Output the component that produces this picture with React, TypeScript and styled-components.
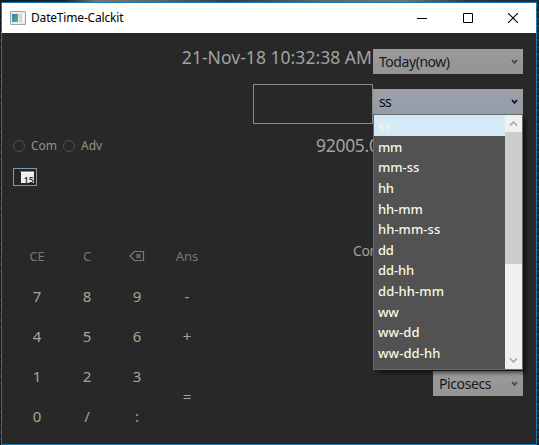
import React from "react";
import styled, { createGlobalStyle } from "styled-components";

const Global = createGlobalStyle`
  * { box-sizing: border-box; }
  body { margin: 0; overflow: hidden; font-family: "Noto Sans", "Open Sans", sans-serif; }
`;

const Desktop = styled.div`
  width: 539px;
  height: 445px;
  padding: 2px 2px 0 1px;
  background:
    repeating-linear-gradient(0deg, rgba(0, 0, 0, 0.35) 0 2px, transparent 2px 5px, rgba(90, 105, 120, 0.22) 5px 7px),
    linear-gradient(90deg, #151c24 0, #20262c 12%, #7c766c 18%, #62625f 30%, #343c44 42%, #67655f 60%, #77746c 75%, #30363b 87%, #202830 100%);
`;

const Window = styled.main`
  display: flex;
  flex-direction: column;
  width: 536px;
  height: 443px;
  border: 1px solid #1679b5;
  background: #282828;
`;

const TitleBar = styled.header`
  display: flex;
  align-items: center;
  flex: 0 0 30px;
  padding-left: 8px;
  background: #fff;
  color: #000;
`;

const Title = styled.h1`
  flex: 1;
  margin: 0 0 1px 5px;
  font-size: 12px;
  font-weight: 400;
  line-height: 18px;
  letter-spacing: -0.18px;
`;

const CaptionButton = styled.button`
  display: grid;
  place-items: center;
  width: 45.5px;
  height: 30px;
  padding: 0;
  border: 0;
  background: none;
`;

const Client = styled.div`
  display: flex;
  flex-direction: column;
  padding: 16px 13px 0 10px;
`;

const DateRow = styled.div`
  display: flex;
  justify-content: flex-end;
  height: 25px;
  margin-bottom: 10px;
`;

const DateText = styled.span`
  margin: -4px 1px 0 0;
  color: #a2a2a2;
  font-size: 17.5px;
  line-height: 24px;
  letter-spacing: 0.04px;
  white-space: nowrap;
`;

const EntryRow = styled.div`
  display: flex;
  justify-content: flex-end;
  align-items: flex-start;
  height: 40px;
`;

const Entry = styled.div`
  width: 120px;
  height: 40px;
  border: 1px solid #888;
`;

const ComboRoot = styled.div<{ $width: number; $active?: boolean }>`
  position: relative;
  display: flex;
  align-items: center;
  justify-content: space-between;
  width: ${(p) => p.$width}px;
  height: 25px;
  margin-top: ${(p) => (p.$active ? 5 : 0)}px;
  padding: 0 4px 0 6px;
  background: ${(p) => (p.$active ? "linear-gradient(#9da0a5, #929dab)" : "linear-gradient(#9b9b9b, #949494)")};
  color: ${(p) => (p.$active ? "#080808" : "#191919")};
  font-size: 14px;
  line-height: 20px;
`;

const ComboText = styled.span<{ $spacing: number }>`
  letter-spacing: ${(p) => p.$spacing}px;
`;

const Chevron = styled.svg`
  display: block;
`;

const Popup = styled.div`
  position: absolute;
  z-index: 2;
  top: 25px;
  left: 0;
  display: flex;
  width: 150px;
  height: 256px;
  border: 1px solid #6b6b6b;
  background: #525252;
  box-shadow: 4px 4px 4px -1px rgba(0, 0, 0, 0.55);
`;

const Options = styled.ul`
  flex: 1;
  margin: 0;
  padding: 0;
  list-style: none;
`;

const Option = styled.li<{ $selected: boolean; $spacing: number }>`
  height: 20.65px;
  padding: 2px 0 0 4px;
  background: ${(p) => (p.$selected ? "#d5eaf8" : "transparent")};
  color: ${(p) => (p.$selected ? "#f6f5de" : "#f7f7e2")};
  font-size: 13px;
  font-weight: 500;
  line-height: 18px;
  letter-spacing: ${(p) => p.$spacing}px;
`;

const Scrollbar = styled.div`
  display: flex;
  flex-direction: column;
  width: 17px;
  background: #f0f0f0;
`;

const ScrollButton = styled.div`
  display: grid;
  place-items: center;
  height: 17px;
`;

const Thumb = styled.div`
  height: 132px;
  margin-bottom: auto;
  background: #cdcdcd;
`;

const ModeRow = styled.div`
  display: flex;
  align-items: center;
  height: 22px;
  margin-top: 10px;
  padding-left: 1px;
`;

const Radio = styled.label<{ $width: number }>`
  display: flex;
  align-items: center;
  gap: 6px;
  width: ${(p) => p.$width}px;
  padding-top: 1px;
  color: #93938b;
  font-size: 12px;
  line-height: 18px;
`;

const RadioDot = styled.i`
  width: 12px;
  height: 12px;
  border: 1px solid #505050;
  border-radius: 50%;
`;

const Result = styled.span`
  margin-left: 203px;
  color: #a2a2a2;
  font-size: 17.5px;
  line-height: 24px;
  letter-spacing: -0.3px;
  white-space: nowrap;
`;

const CalendarButton = styled.button`
  display: block;
  width: 24px;
  height: 18px;
  margin: 12px 0 0 1px;
  padding: 0;
  border: 1px solid #8396a8;
  background: #262626;
`;

const Lower = styled.div`
  display: flex;
  justify-content: space-between;
  height: 200px;
  margin-top: 50px;
`;

const Keypad = styled.div`
  display: grid;
  grid-template-columns: repeat(4, 50px);
  grid-template-rows: repeat(5, 40px);
`;

const Key = styled.button<{ $command?: boolean; $tall?: boolean }>`
  display: grid;
  place-items: center;
  grid-row: span ${(p) => (p.$tall ? 2 : 1)};
  padding: 0;
  border: 0;
  background: none;
  color: ${(p) => (p.$command ? "#777" : "#a6a696")};
  font: ${(p) => (p.$command ? "13px" : "15px")} "Noto Sans", sans-serif;
  letter-spacing: ${(p) => (p.$command ? "-0.1px" : "0")};
`;

const Side = styled.div`
  display: flex;
  flex-direction: column;
  align-items: flex-end;
  justify-content: space-between;
  width: 170px;
  padding: 5px 0 40px;
`;

const Convert = styled.span`
  align-self: flex-start;
  color: #a4a496;
  font-size: 14px;
  line-height: 20px;
  letter-spacing: -0.4px;
`;

const options: [string, number][] = [
  ["ss", 0], ["mm", -0.3], ["mm-ss", 0], ["hh", -0.4], ["hh-mm", -0.1], ["hh-mm-ss", 0.05],
  ["dd", -0.2], ["dd-hh", -0.1], ["dd-hh-mm", 0.1], ["ww", -0.2], ["ww-dd", 0.05], ["ww-dd-hh", 0.1],
];

const Arrow = ({ up }: { up?: boolean }) => (
  <svg width="9" height="7" viewBox="0 0 9 7">
    <path d={up ? "M1 5.5 4.5 2 8 5.5" : "M1 1.5 4.5 5 8 1.5"} fill="none" stroke="#a3a3a3" strokeWidth="1.5" />
  </svg>
);

type ComboProps = { label: string; width: number; spacing: number; active?: boolean; children?: React.ReactNode };

const Combo = ({ label, width, spacing, active, children }: ComboProps) => (
  <ComboRoot $width={width} $active={active}>
    <ComboText $spacing={spacing}>{label}</ComboText>
    <Chevron width="9" height="8" viewBox="0 0 9 8">
      <path d="M2 2 4.5 5 7 2" fill="none" stroke={active ? "#111" : "#444"} strokeWidth="1.7" />
    </Chevron>
    {children}
  </ComboRoot>
);

const Backspace = () => (
  <svg width="16" height="12" viewBox="0 0 16 12" fill="none" stroke="#7b7b7b">
    <path d="M5.5 1.5h9v9h-9L1 6z" strokeWidth="1.2" />
    <path d="m7.5 4 4 4m0-4-4 4" strokeWidth="1.3" />
  </svg>
);

const AppIcon = () => (
  <svg width="16" height="14" viewBox="0 0 16 14">
    <defs>
      <linearGradient id="pane" x1="0" y1="0" x2="1" y2="1">
        <stop stopColor="#3d78b5" />
        <stop offset="1" stopColor="#55b874" />
      </linearGradient>
    </defs>
    <path d="M.5.5h15v13H.5z" fill="#e9ecee" stroke="#a2a6aa" />
    <path d="M2 3h6v8H2z" fill="url(#pane)" />
    <path d="M9 3h3v8H9z" fill="#d4dade" />
    <path d="M13 3h1v8h-1z" fill="#fff" />
  </svg>
);

const CalendarIcon = () => (
  <svg width="22" height="16" viewBox="0 0 22 16">
    <path d="M7 4h13v10H7z" fill="#f0f0f0" />
    <path d="M6 2h14v1H6z" fill="#5489b9" />
    <path d="M7 3h13v1H7z" fill="#fff" />
    <text x="9.5" y="13.5" fill="#303030" fontFamily="Noto Sans, sans-serif" fontSize="9" fontWeight="600">15</text>
  </svg>
);

export default function App() {
  return (
    <>
      <Global />
      <Desktop>
        <Window>
          <TitleBar>
            <AppIcon />
            <Title>DateTime-Calckit</Title>
            <CaptionButton aria-label="Minimize">
              <svg width="10" height="10"><path d="M0 5.5h10" stroke="#000" /></svg>
            </CaptionButton>
            <CaptionButton aria-label="Maximize">
              <svg width="10" height="10"><path d="M.5.5h9v9h-9z" fill="none" stroke="#000" /></svg>
            </CaptionButton>
            <CaptionButton aria-label="Close">
              <svg width="10" height="10"><path d="m0 0 10 10M10 0 0 10" stroke="#000" strokeWidth="1.1" /></svg>
            </CaptionButton>
          </TitleBar>
          <Client>
            <DateRow>
              <DateText>21-Nov-18 10:32:38 AM</DateText>
              <Combo label="Today(now)" width={150} spacing={-0.45} />
            </DateRow>
            <EntryRow>
              <Entry />
              <Combo label="ss" width={150} spacing={-0.6} active>
                <Popup>
                  <Options>
                    {options.map(([text, spacing], i) => (
                      <Option key={text} $selected={i === 0} $spacing={spacing}>{text}</Option>
                    ))}
                  </Options>
                  <Scrollbar>
                    <ScrollButton><Arrow up /></ScrollButton>
                    <Thumb />
                    <ScrollButton><Arrow /></ScrollButton>
                  </Scrollbar>
                </Popup>
              </Combo>
            </EntryRow>
            <ModeRow>
              <Radio $width={50}><RadioDot />Com</Radio>
              <Radio $width={50}><RadioDot />Adv</Radio>
              <Result>92005.0</Result>
            </ModeRow>
            <CalendarButton aria-label="Calendar"><CalendarIcon /></CalendarButton>
            <Lower>
              <Keypad>
                <Key $command>CE</Key>
                <Key $command>C</Key>
                <Key $command aria-label="Backspace"><Backspace /></Key>
                <Key $command>Ans</Key>
                <Key>7</Key><Key>8</Key><Key>9</Key><Key>-</Key>
                <Key>4</Key><Key>5</Key><Key>6</Key><Key>+</Key>
                <Key>1</Key><Key>2</Key><Key>3</Key><Key $tall>=</Key>
                <Key>0</Key><Key>/</Key><Key>:</Key>
              </Keypad>
              <Side>
                <Convert>Con</Convert>
                <Combo label="Picosecs" width={90} spacing={-0.4} />
              </Side>
            </Lower>
          </Client>
        </Window>
      </Desktop>
    </>
  );
}
